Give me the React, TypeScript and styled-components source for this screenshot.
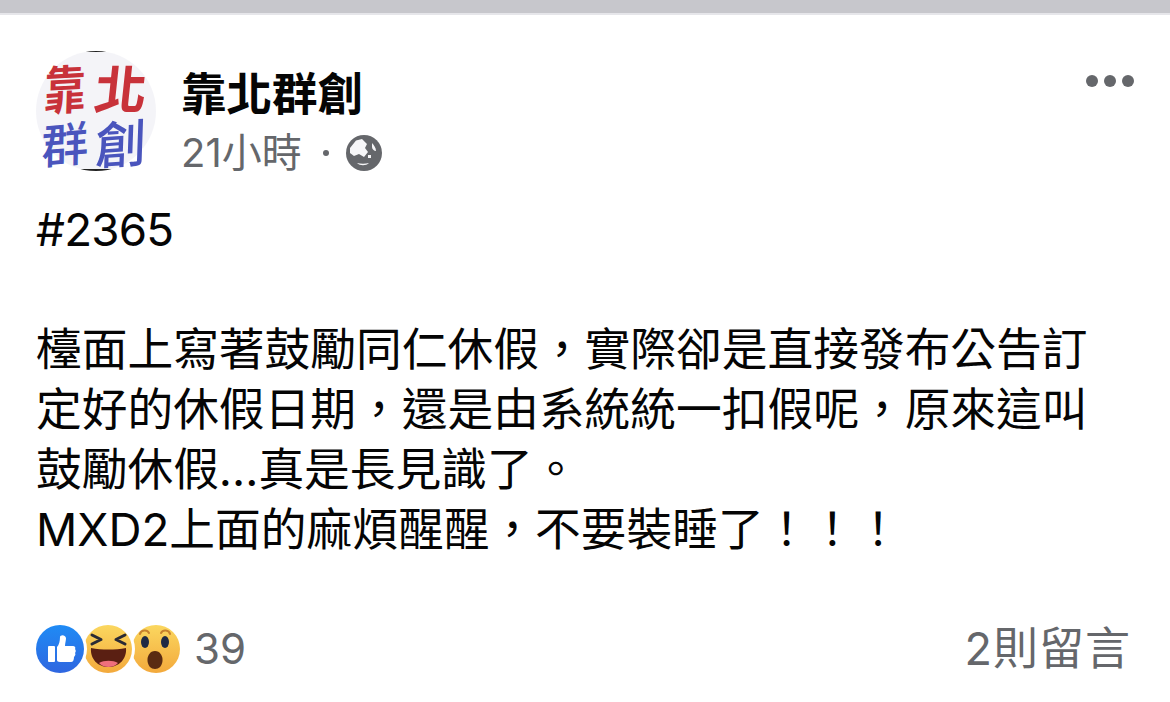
import React from 'react';
import styled, { createGlobalStyle } from 'styled-components';

const GlobalStyle = createGlobalStyle`
  html, body {
    margin: 0;
    padding: 0;
    background: #fff;
  }
  body {
    font-family: Inter, "Noto Sans CJK TC", sans-serif;
    overflow: hidden;
  }
`;

const Page = styled.div`
  width: 1170px;
  height: 702px;
  display: flex;
  flex-direction: column;
  background: #fff;
  overflow: hidden;
`;

const TopStrip = styled.div`
  height: 13px;
  flex: none;
  background: #c7c7cc;
  border-bottom: 2px solid #e6e6ea;
`;

const Post = styled.article`
  flex: 1;
  display: flex;
  flex-direction: column;
  padding: 36px 36px 0 36px;
`;

const Header = styled.header`
  display: flex;
  align-items: flex-start;
  gap: 25px;
`;

const Avatar = styled.div`
  width: 120px;
  height: 120px;
  flex: none;
  border-radius: 50%;
  background: linear-gradient(#222 0 1.5px, #f4f4f8 1.5px, #f4f4f8 calc(100% - 1.5px), #222 calc(100% - 1.5px));
  display: grid;
  grid-template-columns: 50px 62px;
  grid-template-rows: 60px 48px;
  padding: 6px 4px;
  box-sizing: border-box;
`;

const Brush = styled.span<{ $color: string; $size: number; $tilt: number; $squeeze: number; $weight: number }>`
  display: flex;
  align-items: center;
  justify-content: center;
  font-family: "Noto Sans CJK TC", sans-serif;
  font-weight: ${props => props.$weight};
  font-size: ${props => props.$size}px;
  line-height: 1;
  color: ${props => props.$color};
  transform: rotate(${props => props.$tilt}deg) scaleX(${props => props.$squeeze}) skewX(-6deg);
`;

const Meta = styled.div`
  flex: 1;
  display: flex;
  flex-direction: column;
  padding-top: 12px;
`;

const Name = styled.div`
  font-family: "Noto Sans CJK TC", sans-serif;
  font-weight: 700;
  font-size: 45.5px;
  line-height: 56px;
  color: #050505;
`;

const TimeRow = styled.div`
  display: flex;
  align-items: center;
  margin-top: 16px;
  font-size: 40px;
  line-height: 36px;
  height: 36px;
  color: #65676b;
`;

const Dot = styled.span`
  width: 6px;
  height: 6px;
  border-radius: 50%;
  background: #65676b;
  margin: 0 17px 0 21px;
`;

const MoreButton = styled.div`
  display: flex;
  gap: 6px;
  padding-top: 24px;
`;

const MoreDot = styled.span`
  width: 12px;
  height: 12px;
  border-radius: 50%;
  background: #65676b;
`;

const Body = styled.div`
  margin-top: 29px;
  font-size: 45.73px;
  line-height: 60px;
  color: #050505;
`;

const Line = styled.div<{ $tight?: boolean }>`
  height: 60px;
  white-space: nowrap;
  letter-spacing: ${props => (props.$tight ? '-0.8px' : '0')};
`;

const Footer = styled.footer`
  display: flex;
  align-items: center;
  justify-content: space-between;
  margin-top: 65px;
  padding-right: 3px;
`;

const Reactions = styled.div`
  display: flex;
  align-items: center;
`;

const ReactionSlot = styled.div<{ $layer: number }>`
  width: 48px;
  height: 48px;
  border-radius: 50%;
  background: #fff;
  box-shadow: 0 0 0 3px #fff;
  position: relative;
  z-index: ${props => props.$layer};
  svg {
    display: block;
  }
`;

const Count = styled.span`
  margin-left: 14px;
  font-size: 42px;
  line-height: 48px;
  color: #65676b;
`;

const Comments = styled.span`
  font-size: 45px;
  line-height: 48px;
  letter-spacing: 1px;
  color: #65676b;
`;

const GlobeIcon = () => (
  <svg width="36" height="36" viewBox="0 0 36 36">
    <circle cx="18" cy="18" r="18" fill="#65676b" />
    <path
      d="M4 13l6-7.5 6-1.5 5 5-2 4 3 4-4 5-5-3-5 2-4-3z"
      fill="#f6f6f8"
    />
    <path d="M26 8c2 2 4 5 4 8-2 0-4-2-4-4z" fill="#f6f6f8" />
    <path d="M22 20l3 0 0 3-3 0zM11 28c4 1 8 1 12 0-3 3-9 3-12 0z" fill="#f6f6f8" />
  </svg>
);

const LikeIcon = () => (
  <svg width="48" height="48" viewBox="0 0 48 48">
    <defs>
      <linearGradient id="likeFill" x1="0" y1="0" x2="0" y2="1">
        <stop offset="0" stopColor="#1f8bf5" />
        <stop offset="1" stopColor="#2f66e0" />
      </linearGradient>
    </defs>
    <circle cx="24" cy="24" r="24" fill="url(#likeFill)" />
    <rect x="12" y="21" width="7" height="16" rx="1" fill="#fff" />
    <path
      d="M21 22c2-2 3-6 3-10 0-2 5-3 6 1 0 3-1 5-1 8h8c2 0 3 2 2 3 1 1 1 3 0 4 1 1 0 3-1 4 0 3-1 5-3 5H24c-2 0-3-1-3-2z"
      fill="#fff"
    />
  </svg>
);

const HahaIcon = () => (
  <svg width="48" height="48" viewBox="0 0 48 48">
    <defs>
      <linearGradient id="hahaFill" x1="0" y1="0" x2="0" y2="1">
        <stop offset="0" stopColor="#fbd75f" />
        <stop offset="1" stopColor="#f3a93c" />
      </linearGradient>
    </defs>
    <circle cx="24" cy="24" r="24" fill="url(#hahaFill)" />
    <path
      d="M8 10l9 4.5-9 4.5M41 10l-9 4.5 9 4.5"
      fill="none"
      stroke="#2a2a35"
      strokeWidth="3"
      strokeLinecap="round"
      strokeLinejoin="round"
    />
    <path d="M7 23c11 2 24 2 35 0 1 11-7 19-17.500 19S6 34 7 23z" fill="#5a1f12" />
    <path d="M15 38c5-3 14-3 19 0-3 3-6 4-9.500 4s-6.500-1-9.500-4z" fill="#ef6f7c" />
  </svg>
);

const WowIcon = () => (
  <svg width="48" height="48" viewBox="0 0 48 48">
    <defs>
      <linearGradient id="wowFill" x1="0" y1="0" x2="0" y2="1">
        <stop offset="0" stopColor="#fbd75f" />
        <stop offset="1" stopColor="#f3a93c" />
      </linearGradient>
    </defs>
    <circle cx="24" cy="24" r="24" fill="url(#wowFill)" />
    <path
      d="M8 9c1-4 7-5 9-1M29 8c2-4 8-3 9 1"
      fill="none"
      stroke="#c7812d"
      strokeWidth="2"
      strokeLinecap="round"
    />
    <ellipse cx="13" cy="17" rx="4" ry="6" fill="#1f2a44" />
    <ellipse cx="33" cy="17" rx="4" ry="6" fill="#1f2a44" />
    <path d="M23 26c5 0 8 5 7.500 10-.5 5-3.500 8-7.500 8s-7-3-7.500-8c-.5-5 2.500-10 7.500-10z" fill="#5a2b12" />
  </svg>
);

const App: React.FC = () => {
  return (
    <Page>
      <GlobalStyle />
      <TopStrip />
      <Post>
        <Header>
          <Avatar>
            <Brush $color="#c8323a" $size={52} $tilt={-3} $squeeze={0.8} $weight={700}>靠</Brush>
            <Brush $color="#c8323a" $size={52} $tilt={0} $squeeze={1} $weight={700}>北</Brush>
            <Brush $color="#4a55bd" $size={47} $tilt={-5} $squeeze={1} $weight={500}>群</Brush>
            <Brush $color="#4a55bd" $size={51} $tilt={-4} $squeeze={1} $weight={500}>創</Brush>
          </Avatar>
          <Meta>
            <Name>靠北群創</Name>
            <TimeRow>
              21小時
              <Dot />
              <GlobeIcon />
            </TimeRow>
          </Meta>
          <MoreButton>
            <MoreDot />
            <MoreDot />
            <MoreDot />
          </MoreButton>
        </Header>
        <Body>
          <Line $tight>#2365</Line>
          <Line />
          <Line>檯面上寫著鼓勵同仁休假，實際卻是直接發布公告訂</Line>
          <Line>定好的休假日期，還是由系統統一扣假呢，原來這叫</Line>
          <Line>鼓勵休假...真是長見識了。</Line>
          <Line>MXD2上面的麻煩醒醒，不要裝睡了！！！</Line>
        </Body>
        <Footer>
          <Reactions>
            <ReactionSlot $layer={3}><LikeIcon /></ReactionSlot>
            <ReactionSlot $layer={2}><HahaIcon /></ReactionSlot>
            <ReactionSlot $layer={1}><WowIcon /></ReactionSlot>
            <Count>39</Count>
          </Reactions>
          <Comments>2則留言</Comments>
        </Footer>
      </Post>
    </Page>
  );
};

export default App;
